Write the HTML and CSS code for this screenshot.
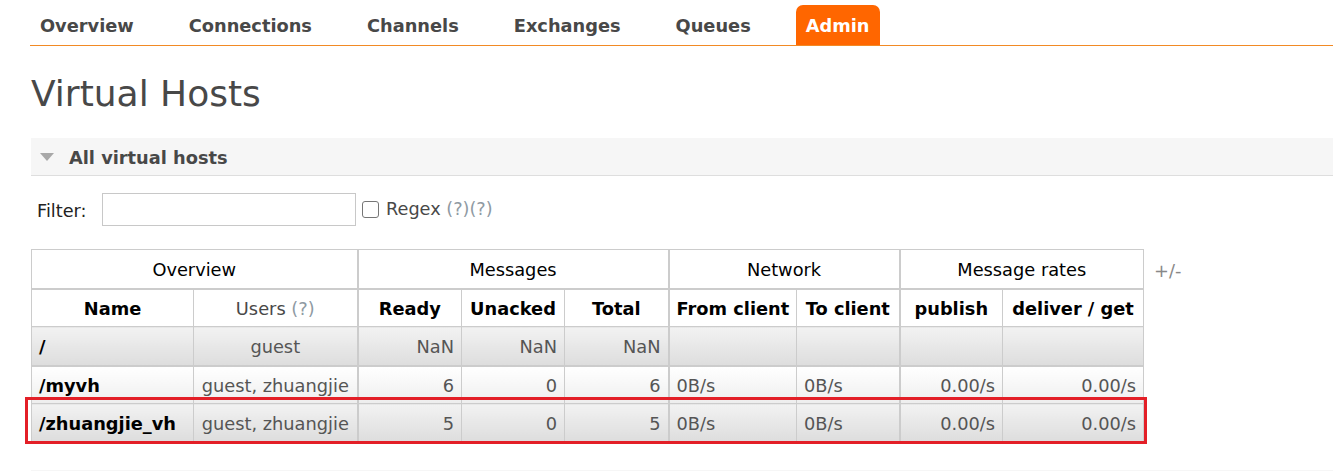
FILE: index.html
```html
<!DOCTYPE html>
<html>
<head>
<meta charset="utf-8">
<title>Virtual Hosts</title>
<link rel="stylesheet" href="styles.css">
</head>
<body>
<div class="page">
  <nav class="menu">
    <a class="menu-item">Overview</a>
    <a class="menu-item">Connections</a>
    <a class="menu-item">Channels</a>
    <a class="menu-item">Exchanges</a>
    <a class="menu-item">Queues</a>
    <a class="menu-item active">Admin</a>
  </nav>

  <h1 class="title">Virtual Hosts</h1>

  <div class="section-head">
    <svg class="tri" width="14" height="8" viewBox="0 0 14 8"><polygon points="0,0 14,0 7,8" fill="#a8a8a8"/></svg>
    <span>All virtual hosts</span>
  </div>

  <div class="filter-row">
    <label class="filter-label">Filter:</label>
    <input class="filter-input" type="text">
    <span class="check"></span>
    <span class="regex">Regex <span class="help">(?)(?)</span></span>
  </div>

  <div class="table-row">
    <div class="table-wrap">
      <table class="list">
        <colgroup>
          <col class="c-name"><col class="c-users"><col class="c-ready"><col class="c-unacked"><col class="c-total"><col class="c-from"><col class="c-to"><col class="c-pub"><col class="c-del">
        </colgroup>
        <thead>
          <tr class="group">
            <th colspan="2" class="gsep">Overview</th>
            <th colspan="3" class="gsep">Messages</th>
            <th colspan="2" class="gsep">Network</th>
            <th colspan="2">Message rates</th>
          </tr>
          <tr class="cols">
            <th>Name</th>
            <th class="normal gsep">Users <span class="help">(?)</span></th>
            <th>Ready</th>
            <th>Unacked</th>
            <th class="gsep">Total</th>
            <th>From client</th>
            <th class="gsep">To client</th>
            <th>publish</th>
            <th>deliver / get</th>
          </tr>
        </thead>
        <tbody>
          <tr class="alt1 thick">
            <td class="name">/</td>
            <td class="c gsep">guest</td>
            <td class="r">NaN</td>
            <td class="r">NaN</td>
            <td class="r gsep">NaN</td>
            <td></td>
            <td class="gsep"></td>
            <td></td>
            <td></td>
          </tr>
          <tr class="alt2">
            <td class="name">/myvh</td>
            <td class="c gsep">guest, zhuangjie</td>
            <td class="r">6</td>
            <td class="r">0</td>
            <td class="r gsep">6</td>
            <td>0B/s</td>
            <td class="gsep">0B/s</td>
            <td class="r">0.00/s</td>
            <td class="r">0.00/s</td>
          </tr>
          <tr class="alt1">
            <td class="name">/zhuangjie_vh</td>
            <td class="c gsep">guest, zhuangjie</td>
            <td class="r">5</td>
            <td class="r">0</td>
            <td class="r gsep">5</td>
            <td>0B/s</td>
            <td class="gsep">0B/s</td>
            <td class="r">0.00/s</td>
            <td class="r">0.00/s</td>
          </tr>
        </tbody>
      </table>
      <div class="highlight"></div>
    </div>
    <span class="plusminus">+/-</span>
  </div>

  <div class="next-section"></div>
</div>
</body>
</html>
```

FILE: styles.css
```css
html, body {
  margin: 0;
  padding: 0;
  background: #fff;
}

body {
  font-family: "DejaVu Sans", Verdana, sans-serif;
  color: #484848;
  overflow: hidden;
}

.page {
  padding-left: 31px;
}

.menu {
  display: flex;
  gap: 35px;
  margin-top: 5px;
  margin-left: -1px;
  border-bottom: 1px solid #f28a24;
  height: 40px;
}

.menu-item {
  display: block;
  height: 38px;
  line-height: 38px;
  padding: 2px 10px 0;
  font-size: 17.8px;
  font-weight: bold;
  color: #484848;
  border-radius: 7px 7px 0 0;
}

.menu-item.active {
  background: #ff6600;
  color: #fff;
}

.title {
  margin: 30px 0 0 0;
  font-size: 36px;
  line-height: 36px;
  font-weight: normal;
  color: #484848;
}

.section-head {
  margin-top: 26px;
  height: 37px;
  background: #f6f6f6;
  border-bottom: 1px solid #dedede;
  display: flex;
  align-items: center;
  padding-left: 9px;
  gap: 15px;
  font-size: 17.8px;
  font-weight: bold;
  color: #484848;
}

.section-head span {
  margin-top: 1px;
}

.tri {
  display: block;
  margin-top: 1px;
}

.filter-row {
  display: flex;
  align-items: center;
  margin-top: 17px;
  height: 33px;
  font-size: 17.7px;
}

.filter-label {
  margin-left: 6px;
  color: #222;
  width: 65px;
  margin-top: 2px;
}

.filter-input {
  box-sizing: border-box;
  width: 254px;
  height: 33px;
  border: 1px solid #c8c8c8;
  margin: 0;
  padding: 0;
}

.check {
  box-sizing: border-box;
  display: block;
  width: 17px;
  height: 17px;
  border: 1px solid #767676;
  border-radius: 3px;
  margin-left: 6px;
  margin-top: 0;
}

.regex {
  margin-left: 7px;
  color: #484848;
  margin-top: -1px;
}

.help {
  color: #8f9aa3;
}

.table-row {
  display: flex;
  align-items: flex-start;
  margin-top: 23px;
  gap: 10px;
}

.table-wrap {
  position: relative;
}

.list {
  border-collapse: collapse;
  table-layout: fixed;
  width: 1112px;
  font-size: 17.8px;
}

.c-name { width: 162px; }
.c-users { width: 164px; }
.c-ready { width: 104px; }
.c-unacked { width: 103px; }
.c-total { width: 104px; }
.c-from { width: 128px; }
.c-to { width: 103px; }
.c-pub { width: 103px; }
.c-del { width: 141px; }

.list th,
.list td {
  border: 1px solid #cccccc;
  height: 37px;
  box-sizing: border-box;
  padding: 3px 7px 0;
  line-height: 22px;
  white-space: nowrap;
  overflow: hidden;
}

.list th {
  background: #fff;
  color: #000;
  text-align: center;
}

.list tr.group th {
  font-weight: normal;
  border-bottom-width: 2px;
  height: 39px;
}

.list th.normal {
  font-weight: normal;
  color: #484848;
}

.list .gsep {
  border-right-width: 2px;
}

.list tr.cols th {
  height: 38px;
}

.list td {
  color: #555;
}

.list td.name {
  font-weight: bold;
  color: #000;
}

.list td.c { text-align: center; }
.list td.r { text-align: right; }

.list tr.alt1 td {
  background: linear-gradient(#f2f2f2, #dddddd);
}

.list tr.alt2 td {
  background: linear-gradient(#ffffff, #eeeeee);
}

.list tr.thick td {
  border-bottom-width: 2px;
  height: 39px;
}

.list tr.alt2 td,
.list tr.alt1:last-child td {
  height: 38px;
}

.highlight {
  position: absolute;
  left: -6px;
  top: 148px;
  width: 1116px;
  height: 41px;
  border: 3px solid #e31f27;
  pointer-events: none;
}

.plusminus {
  color: #888;
  font-size: 17.8px;
  margin-top: 11px;
}

.next-section {
  margin-top: 28px;
  height: 20px;
  background: #f6f6f6;
}
```
